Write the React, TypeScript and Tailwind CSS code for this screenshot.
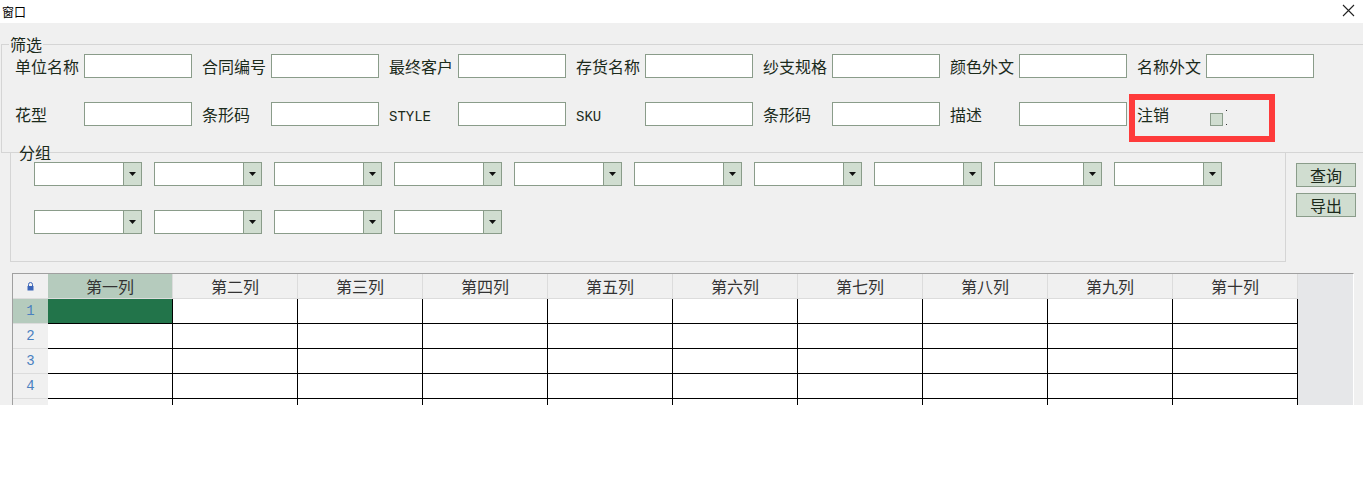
import React from 'react';

const cn = "font-['Noto_Sans_CJK_SC','Liberation_Sans',sans-serif]";

const row1 = ['单位名称', '合同编号', '最终客户', '存货名称', '纱支规格', '颜色外文', '名称外文'];
const row2 = ['花型', '条形码', 'STYLE', 'SKU', '条形码', '描述'];
const cols = ['第一列', '第二列', '第三列', '第四列', '第五列', '第六列', '第七列', '第八列', '第九列', '第十列'];

const Label: React.FC<{ text: string }> = ({ text }) => {
  const latin = /^[A-Z]+$/.test(text);
  return (
    <span
      className={`w-[69px] shrink-0 whitespace-nowrap ${latin ? 'mt-[6px] font-mono text-[14px]' : 'text-[16px]'} leading-[18px] text-[#1b2a1b]`}
    >
      {text}
    </span>
  );
};

const TextBox = () => <div className="h-[24px] w-[108px] shrink-0 border border-[#8a9c8a] bg-white" />;

const Combo = () => (
  <div className="flex h-[24px] w-[108px] shrink-0 border border-[#8a9c8a] bg-white">
    <div className="flex-1" />
    <div className="flex w-[18px] items-center justify-center border-l border-[#8a9c8a] bg-[#d0ddd0]">
      <svg width="7" height="4" viewBox="0 0 7 4">
        <path d="M0 0h7L3.5 4z" fill="#111" />
      </svg>
    </div>
  </div>
);

const LockIcon = () => (
  <svg width="7" height="9" viewBox="0 0 7 9">
    <path d="M1.5 4V2.5a2 2 0 0 1 4 0V4" fill="none" stroke="#3a64b8" strokeWidth="1" />
    <rect x="0.5" y="4" width="6" height="4.5" fill="#3a64b8" />
  </svg>
);

export default function App() {
  return (
    <div className={`relative w-[1363px] bg-white ${cn}`}>
      {/* title bar */}
      <div className="flex h-[23px] items-center justify-between bg-white pl-[2px] pr-[8px]">
        <span className="text-[12px] leading-[14px] text-black">窗口</span>
        <svg width="13" height="13" viewBox="0 0 13 13" className="mb-[2px]">
          <path d="M1 1l11 11M12 1L1 12" stroke="#222" strokeWidth="1.1" />
        </svg>
      </div>

      <div className="relative h-[382px] overflow-hidden bg-[#f0f0f0] pt-[12px]">
        {/* 筛选 */}
        <fieldset className="ml-[1px] h-[118px] border border-r-0 border-[#d5d5d5] pl-[7px]">
          <legend className="px-[1px] text-[16px] leading-[18px] text-[#1b2a1b]">筛选</legend>
          <div className="mt-[1px] flex gap-[10px] pl-[6px]">
            {row1.map((t) => (
              <div key={t} className="flex items-center">
                <Label text={t} />
                <TextBox />
              </div>
            ))}
          </div>
          <div className="mt-[24px] flex gap-[10px] pl-[6px]">
            {row2.map((t, i) => (
              <div key={i} className="flex items-center">
                <Label text={t} />
                <TextBox />
              </div>
            ))}
            <div className="flex h-[24px] items-center">
              <span className="w-[73px] text-[16px] leading-[18px] text-[#1b2a1b]">注销</span>
              <div className="flex h-[24px] items-end">
                <div className="h-[13px] w-[13px] border border-[#8a9c8a] bg-[#d0ddd0]" />
                <div className="mb-[1px] ml-[3px] flex h-[15px] flex-col justify-between">
                  <div className="h-[1px] w-[1px] bg-[#333]" />
                  <div className="h-[1px] w-[1px] bg-[#333]" />
                </div>
              </div>
            </div>
          </div>
        </fieldset>

        {/* 分组 + buttons */}
        <div className="mt-[-10px] flex">
          <fieldset className="ml-[10px] h-[119px] w-[1276px] border border-[#d5d5d5] pl-[7px]">
            <legend className="px-[1px] text-[16px] leading-[18px] text-[#1b2a1b]">分组</legend>
            <div className="mt-[1px] flex gap-[12px] pl-[16px]">
              {Array.from({ length: 10 }).map((_, i) => (
                <Combo key={i} />
              ))}
            </div>
            <div className="mt-[24px] flex gap-[12px] pl-[16px]">
              {Array.from({ length: 4 }).map((_, i) => (
                <Combo key={i} />
              ))}
            </div>
          </fieldset>
          <div className="ml-[10px] mt-[20px] flex flex-col gap-[6px]">
            {['查询', '导出'].map((t) => (
              <button
                key={t}
                className="flex h-[24px] w-[60px] items-center justify-center border border-[#8a9c8a] bg-[#d0ddd0] text-[16px] leading-[18px] text-[#1b2a1b]"
              >
                {t}
              </button>
            ))}
          </div>
        </div>

        {/* grid */}
        <div className="ml-[12px] mt-[11px] w-[1342px] border-l border-r border-t border-l-[#a0a0a0] border-r-white border-t-[#a0a0a0]">
          <div className="flex h-[25px]">
            <div className="flex w-[35px] items-center justify-center border-b border-[#dcdcdc] bg-[#f0f0f0]">
              <LockIcon />
            </div>
            {cols.map((c, i) => (
              <div
                key={c}
                className={`flex w-[125px] items-center justify-center border-b border-r border-[#dcdcdc] text-[16px] leading-[18px] text-[#333] ${
                  i === 0 ? 'bg-[#b5cbbd]' : 'bg-[#f0f0f0]'
                }`}
              >
                {c}
              </div>
            ))}
            <div className="flex-1 bg-[#e6e7e9]" />
          </div>
          {[1, 2, 3, 4, 5].map((r) => (
            <div key={r} className="flex h-[25px]">
              <div
                className={`flex w-[35px] items-center justify-center border-b border-[#dcdcdc] font-mono text-[14px] text-[#4a80c0] ${
                  r === 1 ? 'bg-[#b5cbbd]' : 'bg-[#f0f0f0]'
                }`}
              >
                {r < 5 ? r : ''}
              </div>
              {cols.map((c, i) => (
                <div
                  key={c}
                  className={`w-[125px] border-b border-r border-black ${r === 1 && i === 0 ? 'bg-[#22744a]' : 'bg-white'}`}
                />
              ))}
              <div className="flex-1 bg-[#e6e7e9]" />
            </div>
          ))}
        </div>
      </div>

      <div className="h-[89px] bg-white" />

      {/* red annotation */}
      <div className="pointer-events-none absolute left-[1129px] top-[94px] h-[48px] w-[146px] border-[6px] border-[#fe3b3b]" />
    </div>
  );
}
